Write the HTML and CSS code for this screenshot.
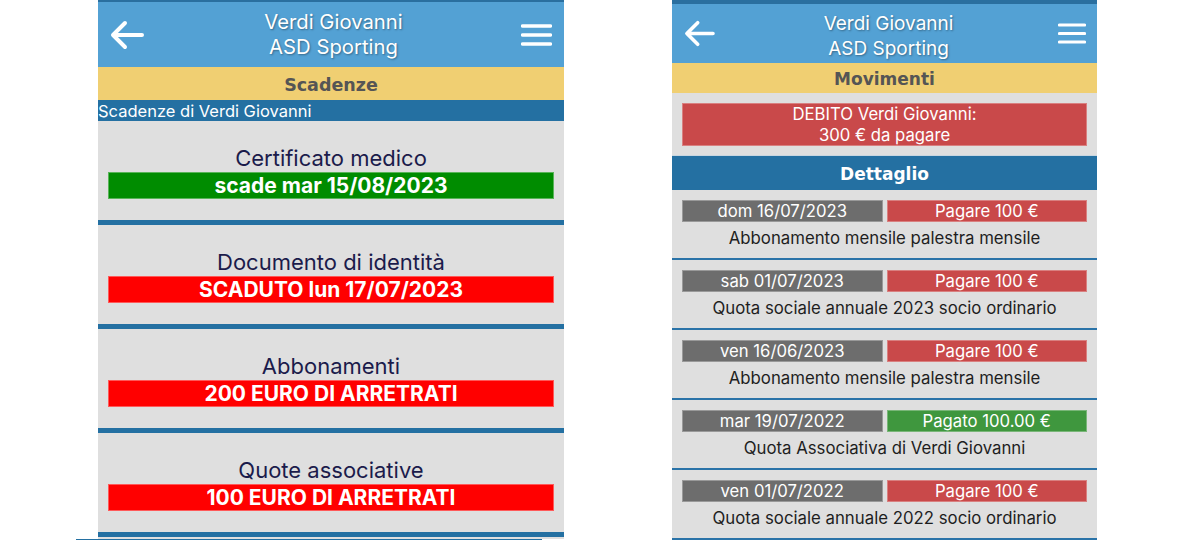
FILE: index.html
```html
<!DOCTYPE html>
<html lang="it">
<head>
<meta charset="utf-8">
<title>Scadenze e Movimenti</title>
<link rel="stylesheet" href="styles.css">
</head>
<body>
<div class="stage">
  <div class="col-left">
    <section class="screen screen-left">
      <header class="appbar appbar-left">
        <svg class="icon-back" viewBox="0 0 34 30" width="34" height="30"><path d="M32 15H4M15 3L3 15l12 12" fill="none" stroke="#fff" stroke-width="4" stroke-linecap="round" stroke-linejoin="round"/></svg>
        <div class="appbar-title"><div>Verdi Giovanni</div><div>ASD Sporting</div></div>
        <svg class="icon-menu" viewBox="0 0 31 22" width="31" height="22"><path d="M1.5 2h28M1.5 11h28M1.5 20h28" fill="none" stroke="#fff" stroke-width="3.4" stroke-linecap="round"/></svg>
      </header>
      <div class="section-title sec-left">Scadenze</div>
      <div class="subtitle">Scadenze di Verdi Giovanni</div>
      <div class="card">
        <div class="card-title">Certificato medico</div>
        <div class="status green">scade mar 15/08/2023</div>
      </div>
      <div class="card">
        <div class="card-title">Documento di identità</div>
        <div class="status red">SCADUTO lun 17/07/2023</div>
      </div>
      <div class="card">
        <div class="card-title">Abbonamenti</div>
        <div class="status red">200 EURO DI ARRETRATI</div>
      </div>
      <div class="card">
        <div class="card-title">Quote associative</div>
        <div class="status red">100 EURO DI ARRETRATI</div>
      </div>
    </section>
    <div class="bottom-line"></div>
  </div>

  <section class="screen screen-right">
    <header class="appbar appbar-right">
      <svg class="icon-back small" viewBox="0 0 34 30" width="31" height="27"><path d="M32 15H4M15 3L3 15l12 12" fill="none" stroke="#fff" stroke-width="4" stroke-linecap="round" stroke-linejoin="round"/></svg>
      <div class="appbar-title"><div>Verdi Giovanni</div><div>ASD Sporting</div></div>
      <svg class="icon-menu" viewBox="0 0 28 21" width="28" height="21"><path d="M1.5 2h25M1.5 10.5h25M1.5 19h25" fill="none" stroke="#fff" stroke-width="3.2" stroke-linecap="round"/></svg>
    </header>
    <div class="section-title sec-right">Movimenti</div>
    <div class="debit-wrap">
      <div class="debit">DEBITO Verdi Giovanni:<br>300 € da pagare</div>
    </div>
    <div class="detail-title">Dettaglio</div>
    <div class="mov">
      <div class="mov-boxes"><div class="date">dom 16/07/2023</div><div class="amt due">Pagare 100 €</div></div>
      <div class="mov-desc">Abbonamento mensile palestra mensile</div>
    </div>
    <div class="mov">
      <div class="mov-boxes"><div class="date">sab 01/07/2023</div><div class="amt due">Pagare 100 €</div></div>
      <div class="mov-desc">Quota sociale annuale 2023 socio ordinario</div>
    </div>
    <div class="mov">
      <div class="mov-boxes"><div class="date">ven 16/06/2023</div><div class="amt due">Pagare 100 €</div></div>
      <div class="mov-desc">Abbonamento mensile palestra mensile</div>
    </div>
    <div class="mov">
      <div class="mov-boxes"><div class="date">mar 19/07/2022</div><div class="amt paid">Pagato 100.00 €</div></div>
      <div class="mov-desc">Quota Associativa di Verdi Giovanni</div>
    </div>
    <div class="mov">
      <div class="mov-boxes"><div class="date">ven 01/07/2022</div><div class="amt due">Pagare 100 €</div></div>
      <div class="mov-desc">Quota sociale annuale 2022 socio ordinario</div>
    </div>
  </section>
</div>
</body>
</html>
```

FILE: styles.css
```css
* { box-sizing: border-box; }
html, body { margin: 0; padding: 0; background: #ffffff; }
body {
  font-family: Inter, "Liberation Sans", Arial, sans-serif;
  width: 1200px;
  height: 540px;
  overflow: hidden;
}
.stage {
  display: flex;
  align-items: flex-start;
  height: 540px;
}
.col-left {
  margin-left: 98px;
  width: 466px;
  display: flex;
  flex-direction: column;
}
.screen {
  background: #dfdfdf;
  overflow: hidden;
  display: flex;
  flex-direction: column;
}
.screen-left {
  width: 466px;
  height: 539px;
  border-top: 2px solid #2a6f9f;
}
.bottom-line {
  height: 1px;
  width: 466px;
  margin-left: -22px;
  background: #2470a2;
}
.screen-right {
  margin-left: 108px;
  width: 425px;
  height: 540px;
  border-top: 4px solid #2a6f9f;
}
.appbar {
  background: #53a1d4;
  display: flex;
  align-items: center;
  justify-content: space-between;
  color: #fff;
}
.appbar-left { height: 65px; padding: 0 12px 0 12px; }
.appbar-right { height: 59px; padding: 0 11px 0 12px; }
.appbar-title {
  text-align: center;
  text-shadow: 1px 1px 2px rgba(0,0,0,0.35);
  line-height: 25px;
}
.appbar-left .appbar-title { font-size: 20.3px; margin-left: 2px; margin-top: -1px; }
.appbar-right .appbar-title { font-size: 19px; line-height: 25px; margin-left: 4px; margin-top: 4px; }
.icon-back { display: block; }
.icon-menu { display: block; }
.section-title {
  background: #f0cf72;
  color: #555555;
  text-align: center;
  font-family: "DejaVu Sans", Lato, sans-serif;
  font-weight: bold;
}
.sec-left { height: 33px; line-height: 36px; font-size: 17.5px; }
.sec-right { height: 30px; line-height: 32px; font-size: 17px; }
.subtitle {
  background: #2470a2;
  color: #fff;
  height: 21px;
  line-height: 22px;
  font-size: 16.5px;
}
.card {
  height: 104px;
  flex: none;
  border-bottom: 5px solid #2470a2;
  padding: 24px 10px 0 10px;
  text-align: center;
}
.card-title {
  color: #1b1b4b;
  font-size: 22px;
  line-height: 27px;
}
.status {
  height: 27px;
  line-height: 25px;
  color: #fff;
  font-weight: bold;
  font-size: 21px;
  border: 1px solid rgba(255,255,255,0.35);
}
.status.green { background: #008c00; }
.status.red { background: #ff0000; }
.debit-wrap {
  padding: 10px 10px 9px 10px;
  border-bottom: 1px solid #c9d6e0;
}
.debit {
  background: #c9494a;
  color: #fff;
  text-align: center;
  font-size: 16.7px;
  line-height: 21px;
  height: 43px;
  padding-top: 0;
  border: 1px solid rgba(255,255,255,0.3);
}
.detail-title {
  background: #2470a2;
  color: #fff;
  height: 34px;
  line-height: 36px;
  text-align: center;
  font-family: "DejaVu Sans", Lato, sans-serif;
  font-weight: bold;
  font-size: 17px;
}
.mov {
  flex: none;
  height: 70px;
  padding: 10px 10px 0 10px;
  border-bottom: 2px solid #2a73a8;
}
.mov-boxes {
  display: flex;
  gap: 4px;
  height: 22px;
}
.date, .amt {
  flex: 1;
  color: #fff;
  text-align: center;
  font-size: 16.7px;
  line-height: 20px;
  border: 1px solid rgba(255,255,255,0.3);
}
.date { background: #6d6d6d; }
.amt.due { background: #c9494a; }
.amt.paid { background: #3f973e; }
.mov-desc {
  text-align: center;
  color: #1e1e1e;
  font-size: 16.8px;
  line-height: 32px;
}
```
